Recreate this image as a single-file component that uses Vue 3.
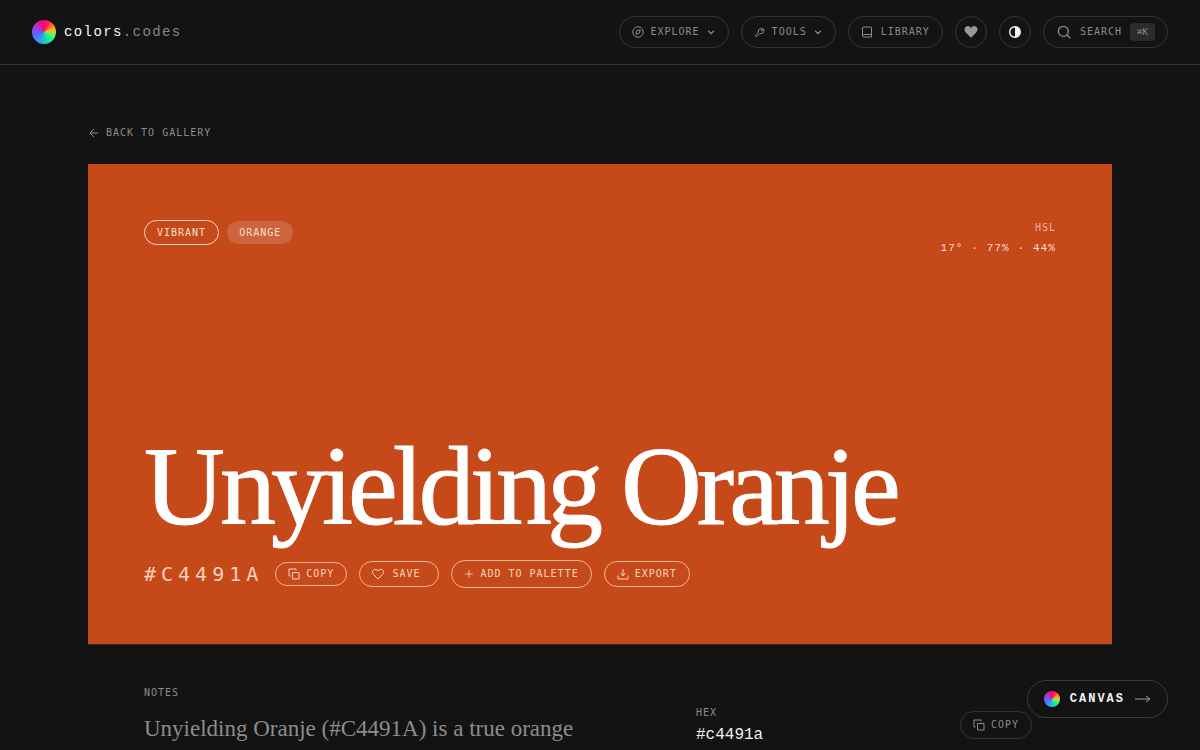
<script setup>
import { ref } from 'vue'

const color = {
  name: 'Unyielding Oranje',
  hex: '#C4491A',
  tone: 'Vibrant',
  family: 'Orange',
  hsl: '17° · 77% · 44%'
}

const saved = ref(false)
const light = ref(false)
</script>

<template>
  <div class="page">
    <header class="top-bar">
      <a class="brand" href="#">
        <span class="wheel wheel-lg"></span>
        <span class="brand-name">colors<span class="muted">.codes</span></span>
      </a>
      <nav class="nav">
        <button class="pill">
          <svg class="icon" viewBox="0 0 24 24"><circle cx="12" cy="12" r="10.500" /><path d="m16.500 7.500-2 7-7 2 2-7z" /></svg>
          Explore
          <svg class="icon chevron" viewBox="0 0 24 24"><path d="m5 9 7 7 7-7" /></svg>
        </button>
        <button class="pill">
          <svg class="icon" viewBox="0 0 24 24"><path d="M15 5a6 6 0 0 0-6 8l-6 5c-1 2 1 4 3 3l6-6a6 6 0 0 0 8-6c0-1 0-2-.5-2.500L16 10l-2-2 3.500-3C17 4 16 4 15 5z" /></svg>
          Tools
          <svg class="icon chevron" viewBox="0 0 24 24"><path d="m5 9 7 7 7-7" /></svg>
        </button>
        <a class="pill wide-gap" href="#">
          <svg class="icon" viewBox="0 0 24 24"><path d="M3 19V4a2 2 0 0 1 2-2h14a2 2 0 0 1 2 2v18H5a2 2 0 0 1-2-3 2 2 0 0 1 2-2h16" /></svg>
          Library
        </a>
        <a class="round" href="#" aria-label="Favorites">
          <svg class="heart-solid" viewBox="0 0 24 24"><path d="M12 22 3 13C-2 7 3 1 8 2c2 .3 3 1.500 4 3 1-1.500 2-2.700 4-3 5-1 10 5 5 11z" /></svg>
        </a>
        <button class="round" aria-label="Toggle theme" @click="light = !light">
          <svg class="contrast" viewBox="0 0 14 14"><circle cx="7" cy="7" r="5.300" /><path d="M7 2a5 5 0 0 1 0 10z" /></svg>
        </button>
        <button class="pill wide-gap">
          <svg class="icon search" viewBox="0 0 24 24"><circle cx="11" cy="11" r="7.500" /><path d="m16.500 16.500 5 5" /></svg>
          Search
          <kbd>⌘K</kbd>
        </button>
      </nav>
    </header>

    <main class="content">
      <a class="back" href="#">
        <svg class="icon" viewBox="0 0 24 24"><path d="M20 12H4m8-8-8 8 8 8" /></svg>
        Back to gallery
      </a>

      <section class="hero">
        <div class="hero-top">
          <div class="tags">
            <span class="tag outlined">{{ color.tone }}</span>
            <span class="tag filled">{{ color.family }}</span>
          </div>
          <dl class="hsl">
            <dt>HSL</dt>
            <dd>{{ color.hsl }}</dd>
          </dl>
        </div>

        <div class="hero-bottom">
          <h1>{{ color.name }}</h1>
          <div class="actions">
            <span class="hex">{{ color.hex }}</span>
            <button class="action small">
              <svg class="icon" viewBox="0 0 24 24"><path d="M9 9h13v13H9zM5 16H2V2h14v3" /></svg>
              Copy
            </button>
            <button class="action save" @click="saved = !saved">
              <svg class="icon" viewBox="0 0 24 24"><path d="M12 22 3 13C-2 7 3 2 8 3c2 .3 3 1.500 4 3 1-1.500 2-2.700 4-3 5-1 10 4 5 10z" /></svg>
              Save
            </button>
            <button class="action tall">
              <svg class="icon plus" viewBox="0 0 24 24"><path d="M12 3v18M3 12h18" /></svg>
              Add to palette
            </button>
            <button class="action">
              <svg class="icon" viewBox="0 0 24 24"><path d="M12 2v14m-5-6 5 6 5-6M2 15v7h20v-7" /></svg>
              Export
            </button>
          </div>
        </div>
      </section>

      <section class="details">
        <div class="notes">
          <h2 class="label">Notes</h2>
          <p>Unyielding Oranje (#C4491A) is a true orange</p>
        </div>
        <div class="code-row">
          <div>
            <h2 class="label">Hex</h2>
            <code>#c4491a</code>
          </div>
          <button class="pill copy-code">
            <svg class="icon" viewBox="0 0 24 24"><path d="M9 9h13v13H9zM5 16H2V2h14v3" /></svg>
            Copy
          </button>
        </div>
      </section>
    </main>

    <button class="canvas-btn">
      <span class="wheel"></span>
      Canvas
      <svg class="long-arrow" viewBox="0 0 16 10"><path d="M0 5h15M11 2l4 3-4 3" /></svg>
    </button>
  </div>
</template>

<style>
body {
  margin: 0;
  background: #131313;
}
</style>

<style scoped>
.page {
  font-family: 'DejaVu Sans Mono', monospace;
  font-size: 10px;
  line-height: 16px;
  color: #8c8c8c;
}

a {
  color: inherit;
  text-decoration: none;
}

button {
  font: inherit;
  color: inherit;
  background: none;
  cursor: pointer;
}

h1,
h2,
p,
dl,
dd {
  margin: 0;
  font-weight: 400;
}

.top-bar {
  display: flex;
  align-items: center;
  justify-content: space-between;
  height: 64px;
  padding: 0 32px;
  border-bottom: 1px solid #363636;
}

.brand {
  display: flex;
  align-items: center;
  gap: 8px;
}

.brand-name {
  font-family: 'Liberation Mono', monospace;
  font-size: 14px;
  line-height: 20px;
  letter-spacing: 0.1em;
  color: #f5f5f5;
}

.brand-name .muted {
  color: #858585;
}

.wheel {
  width: 16px;
  height: 16px;
  border-radius: 50%;
  background: conic-gradient(#ff0078, #ff2a50 30deg, #ff9a1f 65deg, #c8d838 88deg, #1fff8a 125deg, #22c8c0 175deg, #3a8cff 220deg, #6a5cff 265deg, #a838c8 305deg, #ff0078);
}

.wheel-lg {
  width: 24px;
  height: 24px;
}

.nav {
  display: flex;
  gap: 12px;
}

.pill,
.action,
.round {
  box-sizing: border-box;
  display: flex;
  align-items: center;
  gap: 6px;
  height: 32px;
  padding: 0 12px;
  border: 1px solid #333;
  border-radius: 20px;
  letter-spacing: 1px;
  text-transform: uppercase;
  white-space: nowrap;
}

.pill.wide-gap {
  gap: 8px;
}

.round {
  width: 32px;
  padding: 0;
  justify-content: center;
}

.icon {
  width: 12px;
  height: 12px;
  fill: none;
  stroke: currentColor;
  stroke-width: 2;
}

.icon.chevron {
  width: 10px;
  height: 10px;
  stroke-width: 3;
}

.icon.search {
  width: 16px;
  height: 16px;
}

.heart-solid {
  width: 14px;
  height: 14px;
  fill: #999;
}

.contrast {
  width: 14px;
  height: 14px;
  fill: none;
  stroke: #f5f5f5;
  stroke-width: 1.4;
}

.contrast path {
  fill: #f5f5f5;
  stroke: none;
}

kbd {
  box-sizing: border-box;
  width: 25px;
  height: 18px;
  border-radius: 3px;
  background: #2b2b2b;
  font-family: inherit;
  font-size: 9px;
  line-height: 18px;
  letter-spacing: 0;
  text-align: center;
}

.content {
  max-width: 1024px;
  margin: 0 auto;
  padding: 60px 32px 0;
}

.back {
  display: inline-flex;
  align-items: center;
  gap: 6px;
  letter-spacing: 1px;
  text-transform: uppercase;
  vertical-align: top;
}

.hero {
  box-sizing: border-box;
  display: flex;
  flex-direction: column;
  justify-content: space-between;
  min-height: 480px;
  margin-top: 23px;
  padding: 56px;
  background: #c6491a;
  color: #f9d3bd;
}

.hero-top {
  display: flex;
  align-items: flex-start;
  justify-content: space-between;
}

.tags {
  display: flex;
  align-items: center;
  gap: 8px;
}

.tag {
  padding: 4px 12px;
  border-radius: 16px;
  line-height: 15px;
  letter-spacing: 1px;
  text-transform: uppercase;
  color: #fbdfd0;
}

.tag.outlined {
  border: 1px solid #f9d3bd;
}

.tag.filled {
  background: #cd643d;
}

.hsl {
  text-align: right;
}

.hsl dt {
  letter-spacing: 1px;
  color: #eeb69c;
}

.hsl dd {
  margin-top: 4px;
  font-family: 'Liberation Mono', monospace;
  font-size: 11px;
  letter-spacing: 0.1em;
  color: #fbdfd0;
}

h1 {
  font-family: 'Liberation Serif', serif;
  font-size: 112px;
  line-height: 112px;
  letter-spacing: -5px;
  -webkit-text-stroke: 1px #fff;
  color: #fff;
}

.actions {
  display: flex;
  align-items: center;
  gap: 12px;
  margin-top: 18px;
}

.hex {
  font-size: 20px;
  line-height: 28px;
  letter-spacing: 5px;
}

.action {
  height: 26px;
  border-color: #f1b598;
}

.action.small {
  height: 24px;
}

.action.tall {
  height: 28px;
}

.action.save {
  min-width: 80px;
  gap: 8px;
}

.icon.plus {
  width: 10px;
  height: 10px;
}

.details {
  display: grid;
  grid-template-columns: 1fr 384px;
  gap: 32px;
  border-top: 1px solid #2a2a2a;
  padding: 40px 56px 0;
}

.label {
  font-size: 10px;
  line-height: 16px;
  letter-spacing: 1px;
  text-transform: uppercase;
}

.notes p {
  margin-top: 12px;
  font-family: 'Liberation Serif', serif;
  font-size: 23px;
  line-height: 32px;
}

.code-row {
  display: flex;
  align-items: center;
  justify-content: space-between;
  padding: 20px 24px 0;
}

.code-row code {
  display: block;
  margin-top: 4px;
  font-family: 'Liberation Mono', monospace;
  font-size: 16px;
  line-height: 20px;
  color: #f0f0f0;
}

.pill.copy-code {
  height: 28px;
}

.canvas-btn {
  position: fixed;
  right: 32px;
  bottom: 32px;
  display: flex;
  align-items: center;
  gap: 10px;
  height: 38px;
  padding: 0 16px;
  border: 1px solid #3a3a3a;
  border-radius: 20px;
  background: #131313;
  color: #f5f5f5;
  font-family: 'Liberation Mono', monospace;
  font-size: 12px;
  font-weight: 700;
  letter-spacing: 2px;
  text-transform: uppercase;
}

.long-arrow {
  width: 16px;
  height: 10px;
  fill: none;
  stroke: #a0a0a0;
}
</style>
